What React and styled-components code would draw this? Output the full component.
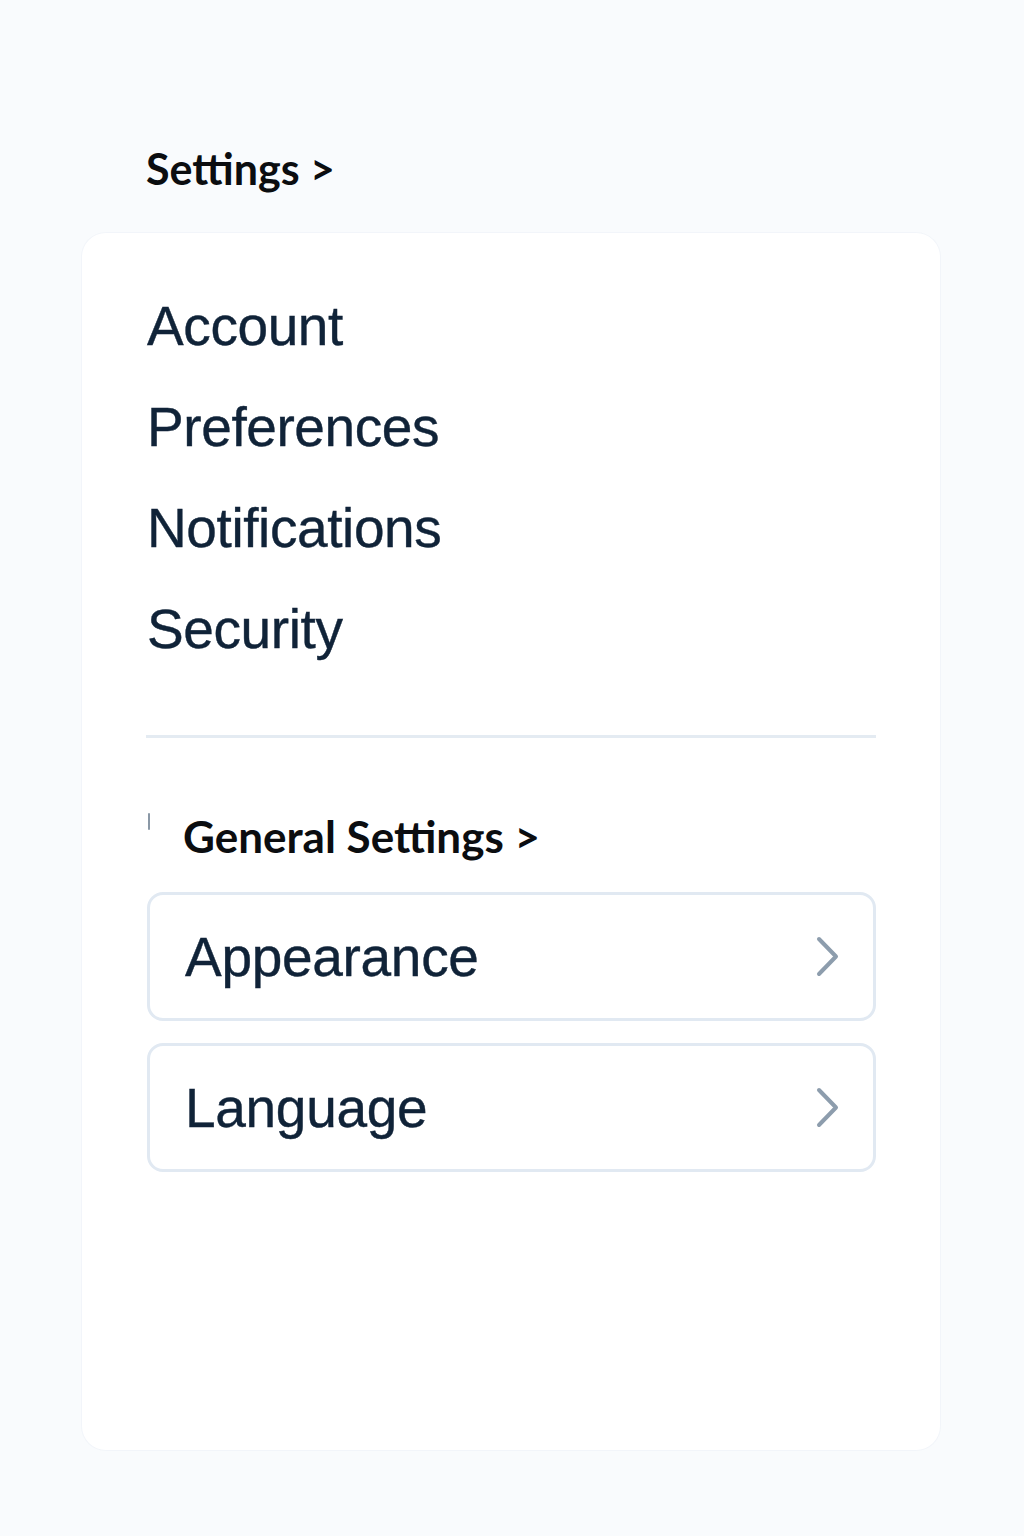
import React from 'react'
import styled, { createGlobalStyle } from 'styled-components'

const GlobalStyle = createGlobalStyle`
  html, body {
    margin: 0;
    padding: 0;
    background: #f9fbfd;
  }
  * {
    box-sizing: border-box;
  }
`

const Page = styled.div`
  width: 1024px;
  min-height: 1536px;
  padding: 143px 84px 0 82px;
  background: #f9fbfd;
`

const PageTitle = styled.h1`
  margin: 0 0 38px 64px;
  font-family: Lato, "Open Sans", sans-serif;
  font-weight: 700;
  font-size: 43px;
  line-height: 52px;
  color: #0b0d10;
`

const Panel = styled.div`
  min-height: 1217px;
  padding: 43px 64px;
  background: #ffffff;
  border-radius: 24px;
  box-shadow: 0 0 0 1px rgba(230, 236, 243, 0.35);
`

const MenuList = styled.ul`
  list-style: none;
  margin: 0;
  padding: 0;
`

const MenuItem = styled.li`
  font-family: "Liberation Sans", Arial, sans-serif;
  font-size: 55px;
  line-height: 101px;
  letter-spacing: -0.4px;
  -webkit-text-stroke: 0.4px #102338;
  color: #102338;
  padding-left: 1px;
`

const Divider = styled.hr`
  margin: 55px 0 0 0;
  border: none;
  height: 3px;
  background: #e4ebf2;
`

const SectionHeading = styled.div`
  display: flex;
  align-items: flex-start;
  gap: 33px;
  margin: 72px 0 30px 2px;
`

const Tick = styled.span`
  width: 2px;
  height: 17px;
  margin-top: 3px;
  background: #8a98a6;
  border-radius: 1px;
`

const SectionTitle = styled.h2`
  margin: 0;
  font-family: Lato, "Open Sans", sans-serif;
  font-weight: 700;
  font-size: 44px;
  line-height: 52px;
  color: #0b0d10;
`

const CardStack = styled.div`
  display: flex;
  flex-direction: column;
  gap: 22px;
  padding-left: 1px;
`

const RowCard = styled.button`
  display: flex;
  align-items: center;
  justify-content: space-between;
  width: 729px;
  height: 129px;
  padding: 0 33px 0 35px;
  background: #ffffff;
  border: 3px solid #e1e9f2;
  border-radius: 16px;
  cursor: pointer;
  text-align: left;
`

const RowLabel = styled.span`
  font-family: "Liberation Sans", Arial, sans-serif;
  font-size: 55px;
  letter-spacing: -0.3px;
  -webkit-text-stroke: 0.4px #102338;
  color: #102338;
`

const Chevron = () => (
  <svg width="24" height="41" viewBox="0 0 24 41" fill="none">
    <polyline
      points="3,3 20,20.5 3,38"
      stroke="#8d9dad"
      strokeWidth="4"
      strokeLinecap="round"
      strokeLinejoin="round"
    />
  </svg>
)

const menu = ['Account', 'Preferences', 'Notifications', 'Security']
const general = ['Appearance', 'Language']

export default function App() {
  return (
    <>
      <GlobalStyle />
      <Page>
        <PageTitle>Settings &gt;</PageTitle>
        <Panel>
          <MenuList>
            {menu.map(item => (
              <MenuItem key={item}>{item}</MenuItem>
            ))}
          </MenuList>
          <Divider />
          <SectionHeading>
            <Tick />
            <SectionTitle>General Settings &gt;</SectionTitle>
          </SectionHeading>
          <CardStack>
            {general.map(item => (
              <RowCard key={item}>
                <RowLabel>{item}</RowLabel>
                <Chevron />
              </RowCard>
            ))}
          </CardStack>
        </Panel>
      </Page>
    </>
  )
}
